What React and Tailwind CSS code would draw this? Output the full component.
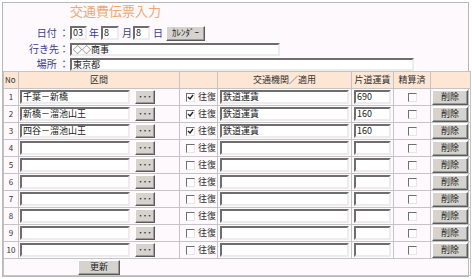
import React from 'react';

const font = { fontFamily: '"Noto Sans CJK JP", "Liberation Sans", sans-serif' };

const rows = [
  { section: '千葉－新橋', round: true, means: '鉄道運賃', fare: '690' },
  { section: '新橋－溜池山王', round: true, means: '鉄道運賃', fare: '160' },
  { section: '四谷－溜池山王', round: true, means: '鉄道運賃', fare: '160' },
  ...Array.from({ length: 7 }, () => ({ section: '', round: false, means: '', fare: '' })),
];

const inset = 'border-2 border-t-[#6e6e6e] border-l-[#6e6e6e] border-b-[#ececec] border-r-[#ececec] bg-white text-[9px] leading-[10px] pl-[1px] text-[#222] overflow-hidden whitespace-nowrap';
const btn = 'border border-t-[#ffffff] border-l-[#ffffff] border-b-[#5a5a5a] border-r-[#5a5a5a] bg-[#d6d3ce] text-[9px] leading-[12px] text-[#222] flex items-center justify-center shadow-[inset_-1px_-1px_0_#9a9a9a]';

const Box = ({ checked }) => (
  <span className="w-[9px] h-[9px] border border-t-[#707070] border-l-[#707070] border-b-[#e6e6e6] border-r-[#e6e6e6] bg-white flex items-center justify-center">
    {checked && (
      <svg width="7" height="7" viewBox="0 0 7 7">
        <path d="M1 3 L3 5 L6 1" stroke="#222" strokeWidth="1.4" fill="none" />
      </svg>
    )}
  </span>
);

const App = () => {
  return (
    <div className="w-[472px] h-[279px] bg-white pl-[2px] pt-[2px]" style={font}>
      <div className="w-[467px] h-[275px] border border-[#b8b8b8] bg-[#fdf9fc] flex flex-col">
        <div className="h-[25px] pl-[67px] pt-[1px] text-[13px] leading-[14px] text-[#f3a76e]">交通費伝票入力</div>

        <div className="flex flex-col gap-[1px] text-[10px] leading-[14px] text-[#3b3b8f]">
          <div className="flex items-center h-[16px]">
            <span className="w-[67px] pr-[1px] text-right whitespace-nowrap">日付 ：</span>
            <div className={`${inset} w-[17px] h-[14px]`}>03</div>
            <span className="w-[14px] pl-[2px]">年</span>
            <div className={`${inset} w-[18px] h-[14px]`}>8</div>
            <span className="w-[14px] pl-[3px]">月</span>
            <div className={`${inset} w-[17px] h-[14px]`}>8</div>
            <span className="w-[16px] pl-[3px]">日</span>
            <div className={`${btn} w-[39px] h-[15px] text-[8px]`}>ｶﾚﾝﾀﾞｰ</div>
          </div>
          <div className="flex items-center h-[14px]">
            <span className="w-[67px] pr-[1px] text-right whitespace-nowrap">行き先：</span>
            <div className={`${inset} w-[210px] h-[13px]`}>◇◇商事</div>
          </div>
          <div className="flex items-center h-[14px]">
            <span className="w-[67px] pr-[1px] text-right whitespace-nowrap">場所 ：</span>
            <div className={`${inset} w-[344px] h-[13px]`}>東京都</div>
          </div>
        </div>

        <table className="table-fixed border-collapse w-[467px] text-[9px] text-[#333]">
          <colgroup>
            <col className="w-[15px]" />
            <col className="w-[161px]" />
            <col className="w-[38px]" />
            <col className="w-[134px]" />
            <col className="w-[42px]" />
            <col className="w-[37px]" />
            <col className="w-[40px]" />
          </colgroup>
          <thead>
            <tr className="h-[17px] bg-[#fde6d3]">
              <th className="border border-[#c4c4c4] font-normal text-[8px] text-left pl-[1px]">No</th>
              <th className="border border-[#c4c4c4] font-normal">区間</th>
              <th className="border border-[#c4c4c4] font-normal"></th>
              <th className="border border-[#c4c4c4] font-normal">交通機関／適用</th>
              <th className="border border-[#c4c4c4] font-normal">片道運賃</th>
              <th className="border border-[#c4c4c4] font-normal">精算済</th>
              <th className="border border-[#c4c4c4] font-normal"></th>
            </tr>
          </thead>
          <tbody>
            {rows.map((r, i) => (
              <tr key={i} className="h-[17px]">
                <td className="border border-[#c4c4c4] p-0 text-center text-[8px]">{i + 1}</td>
                <td className="border border-[#c4c4c4] p-0">
                  <div className="flex items-center pl-[1px]">
                    <div className={`${inset} w-[110px] h-[14px]`}>{r.section}</div>
                    <div className={`${btn} ml-[5px] w-[20px] h-[14px]`}>･･･</div>
                  </div>
                </td>
                <td className="border border-[#c4c4c4] p-0">
                  <div className="flex items-center pl-[6px] gap-[3px]">
                    <Box checked={r.round} />
                    <span>往復</span>
                  </div>
                </td>
                <td className="border border-[#c4c4c4] p-0">
                  <div className="flex items-center pl-[2px]">
                    <div className={`${inset} w-[129px] h-[14px]`}>{r.means}</div>
                  </div>
                </td>
                <td className="border border-[#c4c4c4] p-0">
                  <div className="flex items-center pl-[2px]">
                    <div className={`${inset} w-[37px] h-[14px]`}>{r.fare}</div>
                  </div>
                </td>
                <td className="border border-[#c4c4c4] p-0">
                  <div className="flex items-center justify-center">
                    <Box />
                  </div>
                </td>
                <td className="border border-[#c4c4c4] p-0">
                  <div className="flex items-center pl-[1px]">
                    <div className={`${btn} w-[36px] h-[15px]`}>削除</div>
                  </div>
                </td>
              </tr>
            ))}
            <tr className="h-[17px]">
              <td colSpan={7} className="border border-[#c4c4c4] p-0">
                <div className="flex items-center pl-[74px]">
                  <div className={`${btn} w-[42px] h-[15px]`}>更新</div>
                </div>
              </td>
            </tr>
          </tbody>
        </table>
      </div>
    </div>
  );
};

export default App;
